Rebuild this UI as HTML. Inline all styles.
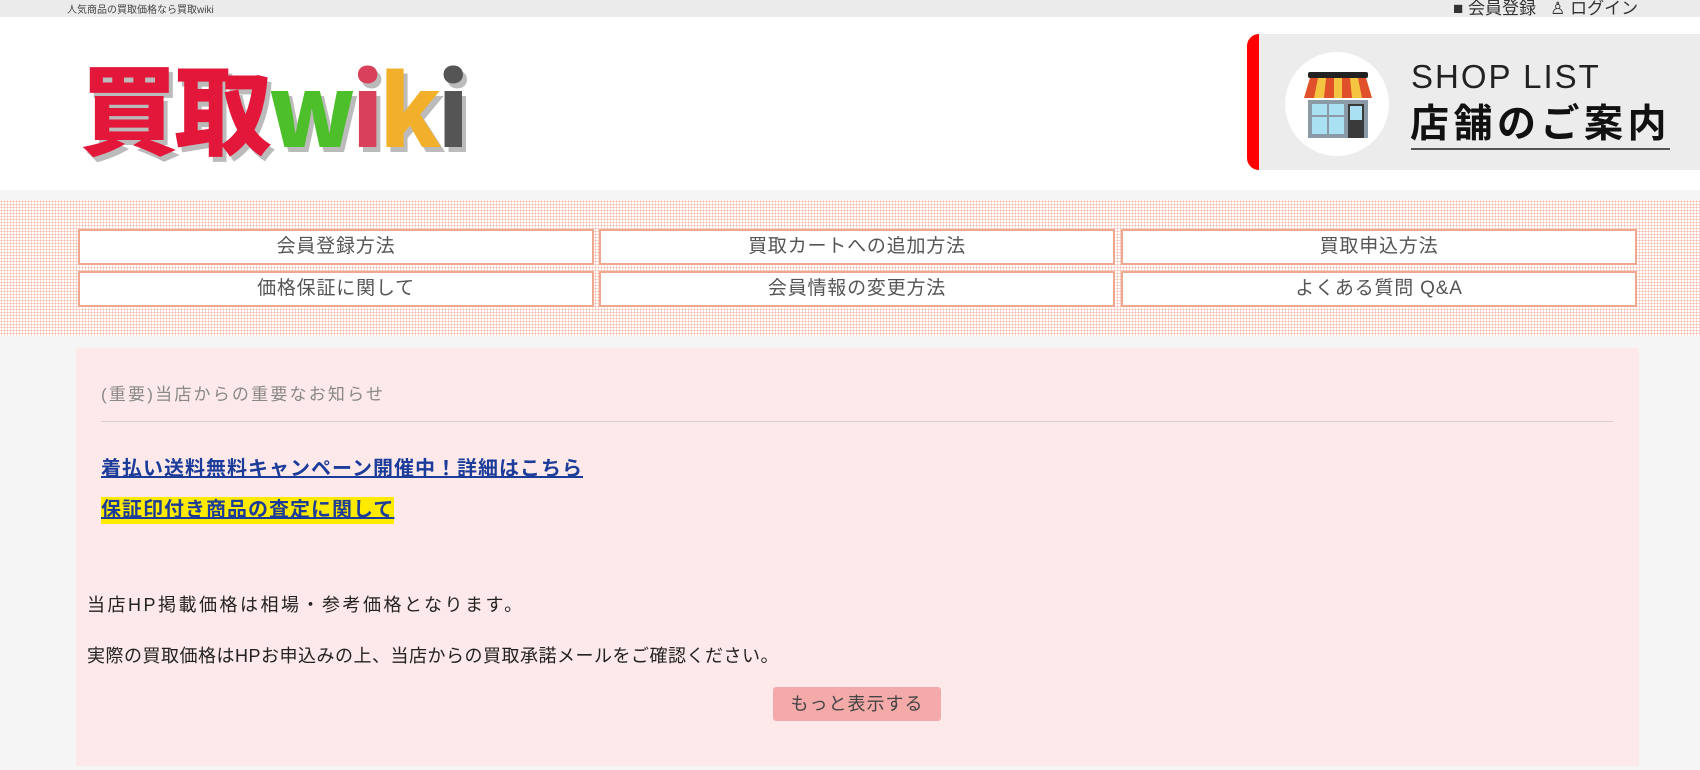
<!DOCTYPE html>
<html><head><meta charset="utf-8"><style>
*{margin:0;padding:0;box-sizing:border-box}
body{width:1700px;height:770px;overflow:hidden;background:#f5f5f5;font-family:"Liberation Sans","Noto Sans CJK JP",sans-serif;position:relative}
.abs{position:absolute}
.top{left:0;top:0;width:1700px;height:17px;background:#ebebeb;font-size:10px;color:#444}
.hdr{left:0;top:17px;width:1700px;height:173px;background:#fff}
.band{left:0;top:200px;width:1700px;height:136px;background-color:#fff;background-image:radial-gradient(#f2b8a8 0.8px,transparent 1px);background-size:3px 3px}
.nb{position:absolute;height:36px;width:516px;background:#fff;border:2px solid #f0a78f;color:#555;font-size:19px;letter-spacing:0.8px;text-align:center;line-height:32px}
.box{left:76px;top:348px;width:1563px;height:418px;background:#fde9e9}
.lk{font-weight:bold;font-size:20px;letter-spacing:1px;color:#1c3c9a;text-decoration:underline}
.tx{font-size:18px;color:#222}
</style></head><body>
<div class="abs top"><span class="abs" style="left:67px;top:1px">人気商品の買取価格なら買取wiki</span>
<span class="abs" style="left:1453px;top:-6px;font-size:17px;color:#333">■ 会員登録 &nbsp; ♙ ログイン</span></div>
<div class="abs hdr"></div>
<div class="abs" style="left:80px;top:42px;font-size:98px;font-weight:900;line-height:126px;letter-spacing:-4px;text-shadow:4px 5px 0 #bbb;font-family:'Noto Sans CJK JP',sans-serif">
<span style="color:#e3173a">買取</span><span style="color:#4cbf2a">w</span><span style="color:#d9405a">i</span><span style="color:#f2b02a">k</span><span style="color:#555">i</span></div>
<div class="abs" style="left:1247px;top:34px;width:460px;height:136px;background:#ececec;border-left:12px solid #f00;border-radius:12px 0 0 12px"></div>
<div class="abs" style="left:1285px;top:52px;width:104px;height:104px;border-radius:50%;background:#fff"></div>
<svg class="abs" style="left:1300px;top:70px" width="76" height="72" viewBox="0 0 76 72">
<rect x="8" y="30" width="60" height="38" fill="#8a9aa6"/>
<rect x="12" y="34" width="32" height="30" fill="#a9e0f2"/><path d="M28 34V64M12 46H44" stroke="#8a9aa6" stroke-width="2"/>
<rect x="48" y="34" width="16" height="34" fill="#3a3a3a"/><rect x="50" y="36" width="12" height="14" fill="#a9e0f2"/>
<rect x="8" y="2" width="60" height="6" rx="2" fill="#222"/>
<path d="M4 28 L10 8 H66 L72 28 Z" fill="#f5c542"/>
<path d="M10 8 L4 28 H14 L18 8Z M26 8 L24 28 H34 L34 8Z M42 8 L42 28 H52 L50 8Z M58 8 L62 28 H72 L66 8Z" fill="#e0502a"/>
</svg>
<div class="abs" style="left:1411px;top:58px;font-size:33px;letter-spacing:2px;color:#222">SHOP LIST</div>
<div class="abs" style="left:1410px;top:99px;font-size:39px;font-weight:bold;letter-spacing:4.5px;color:#111;font-family:'Noto Sans CJK JP',sans-serif;line-height:44px">店舗のご案内</div>
<div class="abs" style="left:1411px;top:148px;width:259px;height:2px;background:#555"></div>
<div class="abs band"></div>
<div class="nb" style="left:78px;top:229px">会員登録方法</div>
<div class="nb" style="left:599px;top:229px">買取カートへの追加方法</div>
<div class="nb" style="left:1121px;top:229px">買取申込方法</div>
<div class="nb" style="left:78px;top:271px">価格保証に関して</div>
<div class="nb" style="left:599px;top:271px">会員情報の変更方法</div>
<div class="nb" style="left:1121px;top:271px">よくある質問 Q&amp;A</div>
<div class="abs box"></div>
<div class="abs" style="left:101px;top:380px;font-size:17px;letter-spacing:2.2px;color:#888">(重要)当店からの重要なお知らせ</div>
<div class="abs" style="left:101px;top:421px;width:1512px;height:1px;background:#d6d0d0"></div>
<div class="abs lk" style="left:101px;top:452px">着払い送料無料キャンペーン開催中！詳細はこちら</div>
<div class="abs lk" style="left:101px;top:497px;background:#ffea00;line-height:27px">保証印付き商品の査定に関して</div>
<div class="abs tx" style="left:87px;top:591px;letter-spacing:2.5px">当店HP掲載価格は相場・参考価格となります。</div>
<div class="abs tx" style="left:87px;top:642px;letter-spacing:0.5px">実際の買取価格はHPお申込みの上、当店からの買取承諾メールをご確認ください。</div>
<div class="abs" style="left:773px;top:687px;width:168px;height:34px;background:#f5aaaa;border-radius:3px;text-align:center;line-height:34px;font-size:18px;letter-spacing:1px;color:#444">もっと表示する</div>
</body></html>
